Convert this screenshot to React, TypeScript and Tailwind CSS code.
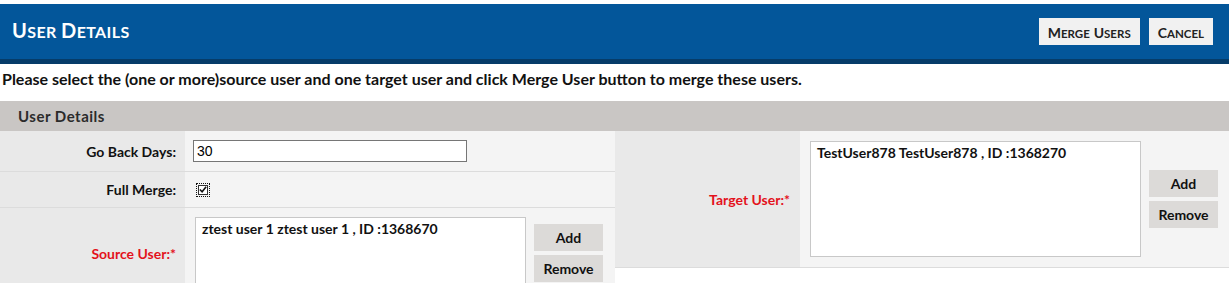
import React from "react";

function GrayBtn({ children }: { children: React.ReactNode }) {
  return (
    <button className="w-[69px] h-[27px] bg-[#dcdad8] text-[14px] font-bold text-[#111] leading-none flex items-center justify-center">
      {children}
    </button>
  );
}

function SmallCaps({ text, big, small }: { text: string; big: string; small: string }) {
  const words = text.split(" ");
  return (
    <>
      {words.map((w, i) => (
        <React.Fragment key={i}>
          {i > 0 ? " " : ""}
          <span className={big}>{w[0]}</span>
          <span className={small}>{w.slice(1).toUpperCase()}</span>
        </React.Fragment>
      ))}
    </>
  );
}

export default function App() {
  return (
    <div className="w-[1229px] h-[283px] overflow-hidden bg-white font-['Lato',sans-serif] text-black">
      <div className="pt-[4px]">
        <div className="h-[60px] bg-[#03569a] border-b-[5px] border-[#063c69] flex items-center justify-between pl-[12px] pr-[16px]">
          <h1 className="font-bold text-white leading-none -mt-[4px] tracking-[0.4px] whitespace-pre">
            <SmallCaps text="User Details" big="text-[20px]" small="text-[16px]" />
          </h1>
          <div className="flex gap-[9px]">
            <button className="h-[27px] px-[9px] bg-[#f1f1f1] font-bold text-[#222] leading-none whitespace-pre">
              <SmallCaps text="Merge Users" big="text-[14px]" small="text-[11.5px]" />
            </button>
            <button className="h-[27px] px-[9px] bg-[#f1f1f1] font-bold text-[#222] leading-none whitespace-pre">
              <SmallCaps text="Cancel" big="text-[14px]" small="text-[11.5px]" />
            </button>
          </div>
        </div>
      </div>
      <p className="h-[37px] pl-[2px] pt-[4px] text-[16px] leading-[22px] font-bold text-[#111] whitespace-nowrap">
        Please select the (one or more)source user and one target user and click Merge User button to merge these users.
      </p>
      <div className="h-[30px] bg-[#c9c6c4] pl-[18px] flex items-center text-[15px] font-bold text-[#2b2b2b] tracking-[0.5px]">
        User Details
      </div>
      <div className="flex">
        {/* left table */}
        <div className="w-[615px] shrink-0">
          <div className="flex h-[41px] border-b border-[#dcdcdc]">
            <div className="w-[185px] bg-[#e9e9e9] flex items-center justify-end pr-[9px] text-[14px] font-bold text-[#111]">
              Go Back Days:
            </div>
            <div className="flex-1 bg-[#f4f4f4] flex items-center pl-[8px]">
              <input
                defaultValue="30"
                className="w-[274px] h-[22px] bg-white border border-[#767676] px-[3px] text-[14px] font-['Liberation_Sans',sans-serif] text-black outline-none"
              />
            </div>
          </div>
          <div className="flex h-[36px] border-b border-[#dcdcdc]">
            <div className="w-[185px] bg-[#e9e9e9] flex items-center justify-end pr-[9px] text-[14px] font-bold text-[#111]">
              Full Merge:
            </div>
            <div className="flex-1 bg-[#f4f4f4] flex items-center pl-[11px]">
              <span className="w-[14px] h-[14px] border border-dotted border-[#111] p-[1px] flex">
                <span className="w-full h-full border border-[#333] bg-white flex items-center justify-center">
                  <svg width="9" height="9" viewBox="0 0 9 9">
                    <path d="M1 4.5 L3.5 7 L8 1.5" stroke="#111" strokeWidth="1.8" fill="none" />
                  </svg>
                </span>
              </span>
            </div>
          </div>
          <div className="flex h-[90px]">
            <div className="w-[185px] bg-[#e9e9e9] flex items-center justify-end pr-[9px] text-[14px] font-bold text-[#e3121c]">
              Source User:*
            </div>
            <div className="flex-1 bg-[#f4f4f4] flex items-center pl-[10px] gap-[8px]">
              <div className="w-[331px] h-[72px] bg-white border border-[#c8c8c8] px-[6px] pt-[1px] text-[14px] leading-[20px] font-bold text-[#111]">
                ztest user 1 ztest user 1 , ID :1368670
              </div>
              <div className="flex flex-col gap-[4px]">
                <GrayBtn>Add</GrayBtn>
                <GrayBtn>Remove</GrayBtn>
              </div>
            </div>
          </div>
        </div>
        {/* right table */}
        <div className="flex-1">
          <div className="flex h-[137px] border-b border-[#dcdcdc]">
            <div className="w-[185px] bg-[#e9e9e9] flex items-center justify-end pr-[10px] text-[14px] font-bold text-[#e3121c]">
              Target User:*
            </div>
            <div className="flex-1 bg-[#f4f4f4] flex items-center pl-[10px] gap-[8px]">
              <div className="w-[331px] h-[116px] bg-white border border-[#c8c8c8] px-[6px] pt-[1px] text-[14px] leading-[20px] font-bold text-[#111]">
                TestUser878 TestUser878 , ID :1368270
              </div>
              <div className="flex flex-col gap-[4px]">
                <GrayBtn>Add</GrayBtn>
                <GrayBtn>Remove</GrayBtn>
              </div>
            </div>
          </div>
        </div>
      </div>
    </div>
  );
}
